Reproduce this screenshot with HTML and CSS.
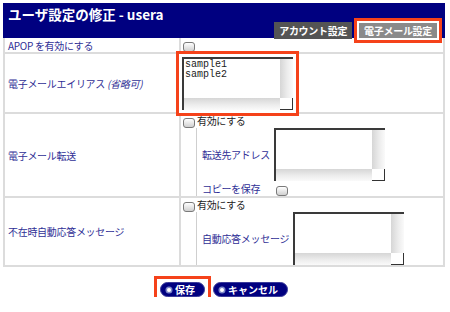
FILE: index.html
```html
<!DOCTYPE html>
<html lang="ja">
<head>
    <meta charset="UTF-8">
    <title>ユーザ設定の修正</title>
    <link rel="stylesheet" href="styles.css">
</head>
<body>
    <div class="page">
        <div class="header">
            <h1>ユーザ設定の修正 - usera</h1>
            <div class="tabs">
                <span class="tab">アカウント設定</span>
                <span class="tab active mark">電子メール設定</span>
            </div>
        </div>

        <table class="form">
            <tr class="row-apop">
                <td class="label">APOP を有効にする</td>
                <td class="value"><input type="checkbox" class="check"></td>
            </tr>
            <tr>
                <td class="label">電子メールエイリアス <i>(省略可)</i></td>
                <td class="value pad">
                    <div class="textbox mark">
                        <div class="text">sample1<br>sample2</div>
                        <div class="vscroll"></div>
                        <div class="hscroll"></div>
                        <div class="corner"></div>
                    </div>
                </td>
            </tr>
            <tr>
                <td class="label">電子メール転送</td>
                <td class="value">
                    <label class="enable"><input type="checkbox" class="check"> 有効にする</label>
                    <table class="sub">
                        <tr>
                            <td class="sub-label">転送先アドレス</td>
                            <td>
                                <div class="textbox">
                                    <div class="text"></div>
                                    <div class="vscroll"></div>
                                    <div class="hscroll"></div>
                                    <div class="corner"></div>
                                </div>
                            </td>
                        </tr>
                        <tr class="copy-row">
                            <td class="sub-label">コピーを保存</td>
                            <td><input type="checkbox" class="check copy"></td>
                        </tr>
                    </table>
                </td>
            </tr>
            <tr>
                <td class="label">不在時自動応答メッセージ</td>
                <td class="value">
                    <label class="enable"><input type="checkbox" class="check"> 有効にする</label>
                    <table class="sub">
                        <tr>
                            <td class="sub-label">自動応答メッセージ</td>
                            <td>
                                <div class="textbox">
                                    <div class="text"></div>
                                    <div class="vscroll"></div>
                                    <div class="hscroll"></div>
                                    <div class="corner"></div>
                                </div>
                            </td>
                        </tr>
                    </table>
                </td>
            </tr>
        </table>

        <div class="buttons">
            <span class="mark"><span class="btn"><span class="dot"></span>保存</span></span>
            <span class="btn"><span class="dot"></span>キャンセル</span>
        </div>
    </div>
</body>
</html>
```

FILE: styles.css
```css
body {
    margin: 0;
    background-color: #fff;
    font-family: "Noto Sans CJK JP", "Noto Sans", sans-serif;
    font-size: 10px;
    color: #222;
}

.page {
    width: 442px;
    margin: 3px 0 0 3px;
}

/* header band */
.header {
    height: 35px;
    background-color: #000080;
    display: flex;
    flex-direction: column;
    justify-content: space-between;
}

.header h1 {
    margin: 0;
    padding: 3px 0 0 5px;
    color: #fff;
    font-size: 13.5px;
    line-height: 16px;
    font-weight: bold;
}

.tabs {
    display: flex;
    align-self: flex-end;
    align-items: flex-end;
    gap: 7px;
    padding-right: 8px;
}

.tab {
    background-color: #545454;
    color: #fff;
    font-weight: bold;
    font-size: 10px;
    line-height: 17px;
    padding: 0 5px;
    letter-spacing: -0.3px;
}

.tab.active {
    background-color: #8a8a8a;
    line-height: 15px;
    margin-bottom: 1px;
}

/* orange highlight rings */
.mark {
    outline: 3px solid #f5421a;
    outline-offset: 3px;
    box-shadow: 0 0 0 3px #fff;
}

.tab.mark {
    outline-offset: 2px;
    box-shadow: 0 0 0 2px #fff;
}

/* form table */
.form {
    width: 442px;
    border-spacing: 0;
    border-left: 2px solid #dcdcdc;
}

.form > tbody > tr > td {
    border-right: 2px solid #dcdcdc;
    border-bottom: 2px solid #dcdcdc;
    padding: 0;
}

.label {
    width: 171px;
    padding-left: 3px !important;
    color: #2f2f96;
    letter-spacing: -0.3px;
    vertical-align: middle;
}

.row-apop td {
    height: 13px;
    line-height: 13px;
}

.value {
    padding: 0 0 0 2px !important;
    vertical-align: top;
}

.value.pad {
    padding: 3px 0 2px 1px !important;
}

.check {
    appearance: none;
    -webkit-appearance: none;
    width: 12px;
    height: 10px;
    margin: 0;
    border: 1px solid #7a7a7a;
    border-radius: 3px;
    background: linear-gradient(#fff, #d0d0d0);
    vertical-align: middle;
    box-sizing: border-box;
}

.row-apop .check {
    margin-top: 2px;
}

.enable {
    display: block;
    height: 13px;
    line-height: 12px;
    padding-top: 1px;
    letter-spacing: -0.3px;
}

/* nested tables */
.sub {
    margin-left: 13px;
    border-spacing: 0;
    border-left: 1px solid #cfcfcf;
}

.sub td {
    padding: 0;
}

.sub-label {
    padding: 0 4px 0 5px !important;
    color: #2f2f96;
    letter-spacing: -0.3px;
    vertical-align: middle;
    white-space: nowrap;
}

.copy-row td {
    height: 13px;
}

.copy {
    margin-left: 2px;
}

/* fake textarea */
.textbox {
    width: 111px;
    height: 53px;
    box-sizing: border-box;
    border-top: 2px solid #3a3a3a;
    border-left: 2px solid #3a3a3a;
    background-color: #fff;
    display: grid;
    grid-template-columns: 1fr 13px;
    grid-template-rows: 1fr 12px;
}

.text {
    font-family: "Liberation Mono", monospace;
    font-size: 10px;
    line-height: 10px;
    color: #222;
    padding: 1px 0 0 1px;
}

.vscroll {
    background: linear-gradient(to right, #d6d6d6, #ececec 55%, #fafafa);
}

.hscroll {
    background: linear-gradient(#d6d6d6, #ececec 55%, #fafafa);
}

.corner {
    background-color: #fff;
    border-right: 1px solid #333;
    border-bottom: 1px solid #333;
}

/* buttons */
.buttons {
    display: flex;
    justify-content: center;
    align-items: center;
    gap: 8px;
    margin-top: 15px;
}

.buttons .mark {
    display: inline-flex;
}

.btn {
    display: inline-flex;
    align-items: center;
    gap: 4px;
    height: 15px;
    padding: 0 9px 0 6px;
    border-radius: 8px;
    background-color: #000080;
    box-sizing: border-box;
    border: 1px solid #3b3b9a;
    color: #fff;
    font-weight: bold;
    font-size: 10px;
}

.dot {
    width: 4px;
    height: 4px;
    border-radius: 50%;
    background-color: #fff;
    box-shadow: 0 0 0 1.5px #7b86c8;
}
```
